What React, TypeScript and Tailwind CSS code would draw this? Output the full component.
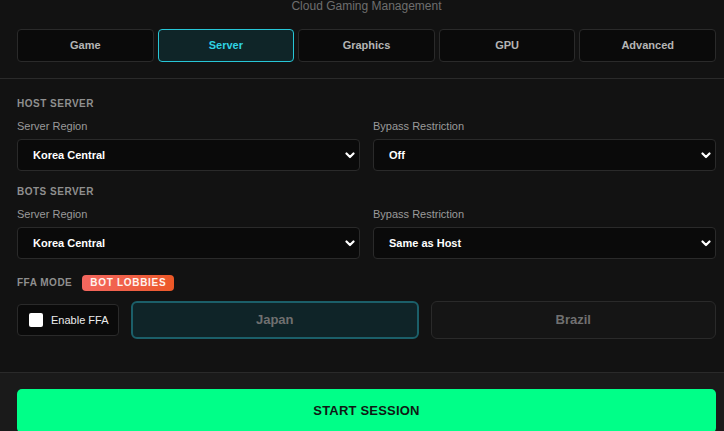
import { useState } from 'react'

const tabs = ['Game', 'Server', 'Graphics', 'GPU', 'Advanced']

function Chevron() {
  return (
    <svg width="10" height="7" viewBox="0 0 10 7" className="shrink-0">
      <polyline points="1.5,1.5 5,5 8.5,1.5" fill="none" stroke="#ffffff" strokeWidth="2.2" strokeLinecap="round" strokeLinejoin="round" />
    </svg>
  )
}

function SelectField({ label, value }: { label: string; value: string }) {
  return (
    <div className="flex flex-col">
      <div className="text-[11px] leading-[14px] text-[#9a9a9a] mb-[6px]">{label}</div>
      <div className="h-[32px] flex items-center justify-between pl-[15px] pr-[4px] bg-[#0a0a0a] border border-[#2a2a2a] rounded-[4px]">
        <span className="text-[11px] font-bold text-white">{value}</span>
        <Chevron />
      </div>
    </div>
  )
}

function SectionTitle({ children }: { children: React.ReactNode }) {
  return (
    <div className="text-[10px] leading-[12px] font-bold tracking-[0.5px] text-[#8f8f8f] uppercase">{children}</div>
  )
}

export default function App() {
  const [active, setActive] = useState('Server')
  const [ffa, setFfa] = useState(false)

  return (
    <div className="w-full h-[431px] overflow-hidden bg-[#121212] font-['Liberation_Sans',Arial,sans-serif]">
      {/* Header + tabs */}
      <div className="border-b border-[#2a2a2a] pb-[16px] pl-[17px] pr-[8px]">
        <div className="text-center text-[12px] leading-[12px] text-[#6e6e6e]">Cloud Gaming Management</div>
        <div className="mt-[17px] grid grid-cols-5 gap-[4px]">
          {tabs.map((t) => (
            <button
              key={t}
              onClick={() => setActive(t)}
              className={
                t === active
                  ? 'h-[33px] rounded-[4px] border border-[#27c6d6] bg-[#0f2528] text-[11px] font-bold text-[#2fd3e3]'
                  : 'h-[33px] rounded-[4px] border border-[#2a2a2a] bg-[#0a0a0a] text-[11px] font-bold text-[#b5b5b5]'
              }
            >
              {t}
            </button>
          ))}
        </div>
      </div>

      {/* Settings */}
      <div className="pl-[17px] pr-[8px] pt-[19px] pb-[33px] border-b border-[#2a2a2a]">
        <SectionTitle>Host Server</SectionTitle>
        <div className="mt-[9px] grid grid-cols-2 gap-x-[13px]">
          <SelectField label="Server Region" value="Korea Central" />
          <SelectField label="Bypass Restriction" value="Off" />
        </div>

        <div className="mt-[15px]">
          <SectionTitle>Bots Server</SectionTitle>
        </div>
        <div className="mt-[9px] grid grid-cols-2 gap-x-[13px]">
          <SelectField label="Server Region" value="Korea Central" />
          <SelectField label="Bypass Restriction" value="Same as Host" />
        </div>

        <div className="mt-[16px] flex items-center gap-[10px] h-[16px]">
          <SectionTitle>FFA Mode</SectionTitle>
          <span className="h-[16px] px-[8px] rounded-[4px] bg-linear-to-r from-[#f4675f] to-[#ec5826] text-[10px] leading-[16px] font-bold tracking-[0.7px] text-[#fff3ee]">
            BOT LOBBIES
          </span>
        </div>

        <div className="mt-[10px] flex items-center gap-3">
          <label className="w-[102px] h-[32px] shrink-0 flex items-center gap-[8px] pl-[11px] bg-[#0a0a0a] border border-[#2a2a2a] rounded-[4px] cursor-pointer">
            <input type="checkbox" checked={ffa} onChange={() => setFfa(!ffa)} className="hidden" />
            <span className="w-[14px] h-[14px] rounded-[2px] bg-white" />
            <span className="text-[11px] text-[#ececec]">Enable FFA</span>
          </label>
          <button className="flex-1 h-[38px] rounded-[6px] border-2 border-[#1b5f69] bg-[#0f2428] text-[13px] font-bold text-[#707070]">
            Japan
          </button>
          <button className="flex-1 h-[38px] rounded-[6px] border border-[#2a2a2a] bg-[#151515] text-[13px] font-bold text-[#707070]">
            Brazil
          </button>
        </div>
      </div>

      {/* Footer */}
      <div className="bg-[#1a1a1a] pl-[17px] pr-[8px] pt-[16px] h-full">
        <button className="w-full h-[44px] rounded-[5px] bg-[#00ff88] text-[13px] font-bold tracking-[0.2px] text-[#0f1a14]">
          START SESSION
        </button>
      </div>
    </div>
  )
}
